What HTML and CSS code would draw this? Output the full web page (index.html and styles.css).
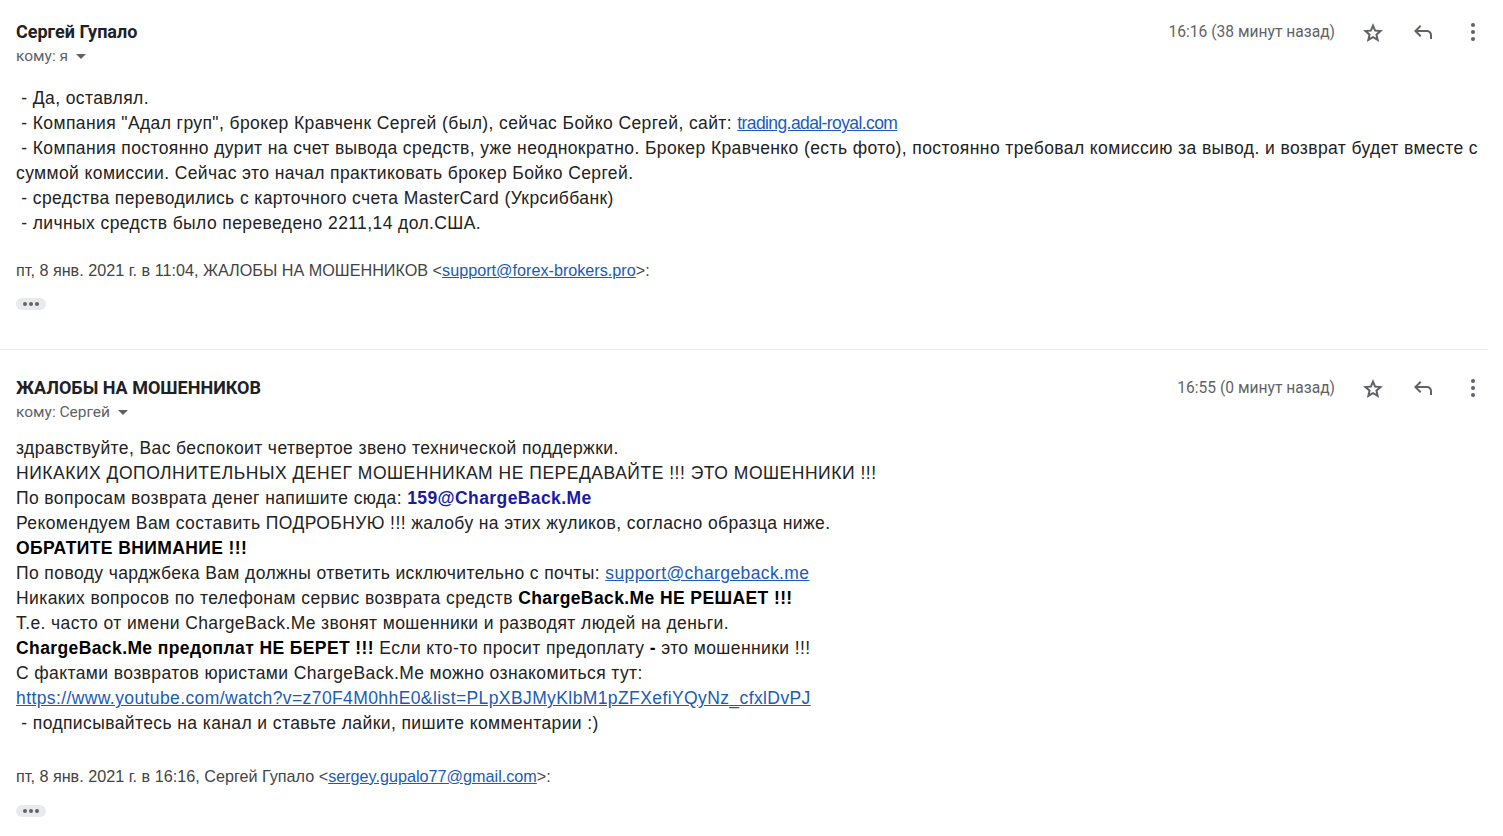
FILE: index.html
```html
<!DOCTYPE html>
<html lang="ru">
<head>
<meta charset="utf-8">
<title>Письмо</title>
<link rel="stylesheet" href="styles.css">
</head>
<body>
<div class="thread">
  <section class="msg msg-first">
    <header class="msg-head">
      <div class="who">
        <div class="sender">Сергей Гупало</div>
        <div class="to">кому: я <span class="caret"></span></div>
      </div>
      <div class="meta">
        <span class="time">16:16 (38 минут назад)</span>
        <button class="icon-btn" aria-label="star"><svg viewBox="0 0 24 24" width="24" height="24"><path fill="#5f6368" d="m8.85 17.825 3.15-1.9 3.150 1.925-.825-3.6 2.775-2.4-3.65-.325-1.45-3.4-1.45 3.375-3.65.325 2.775 2.425ZM5.825 22l1.625-7.025L2 10.250l7.2-.625L12 3l2.8 6.625 7.2.625-5.45 4.725L18.175 22 12 18.275Z"/></svg></button>
        <button class="icon-btn" aria-label="reply"><svg viewBox="0 0 24 24" width="24" height="24"><path fill="#5f6368" d="M19 19v-4q0-1.25-.875-2.125T16 12H6.825l3.6 3.6L9 17l-6-6 6-6 1.425 1.4-3.6 3.6H16q2.075 0 3.538 1.463T21 15v4Z"/></svg></button>
        <button class="icon-btn" aria-label="more"><svg viewBox="0 0 24 24" width="24" height="24"><circle cx="12" cy="5" r="2" fill="#5f6368"/><circle cx="12" cy="12" r="2" fill="#5f6368"/><circle cx="12" cy="19" r="2" fill="#5f6368"/></svg></button>
      </div>
    </header>
    <div class="msg-body">
      <p class="line">&nbsp;- Да, оставлял.</p>
      <p class="line">&nbsp;- Компания "Адал груп", брокер Кравченк Сергей (был), сейчас Бойко Сергей, сайт: <a class="narrow" href="#">trading.adal-royal.com</a></p>
      <p class="line">&nbsp;- Компания постоянно дурит на счет вывода средств, уже неоднократно. Брокер Кравченко (есть фото), постоянно требовал комиссию за вывод. и возврат будет вместе с суммой комиссии. Сейчас это начал практиковать брокер Бойко Сергей.</p>
      <p class="line">&nbsp;- средства переводились с карточного счета MasterCard (Укрсиббанк)</p>
      <p class="line">&nbsp;- личных средств было переведено 2211,14 дол.США.</p>
      <p class="attrib">пт, 8 янв. 2021 г. в 11:04, ЖАЛОБЫ НА МОШЕННИКОВ &lt;<a href="#">support@forex-brokers.pro</a>&gt;:</p>
      <div class="more-pill"><span></span><span></span><span></span></div>
    </div>
  </section>
  <hr class="divider">
  <section class="msg msg-second">
    <header class="msg-head">
      <div class="who">
        <div class="sender">ЖАЛОБЫ НА МОШЕННИКОВ</div>
        <div class="to">кому: Сергей <span class="caret"></span></div>
      </div>
      <div class="meta">
        <span class="time">16:55 (0 минут назад)</span>
        <button class="icon-btn" aria-label="star"><svg viewBox="0 0 24 24" width="24" height="24"><path fill="#5f6368" d="m8.85 17.825 3.15-1.9 3.150 1.925-.825-3.6 2.775-2.4-3.65-.325-1.45-3.4-1.45 3.375-3.65.325 2.775 2.425ZM5.825 22l1.625-7.025L2 10.250l7.2-.625L12 3l2.8 6.625 7.2.625-5.45 4.725L18.175 22 12 18.275Z"/></svg></button>
        <button class="icon-btn" aria-label="reply"><svg viewBox="0 0 24 24" width="24" height="24"><path fill="#5f6368" d="M19 19v-4q0-1.25-.875-2.125T16 12H6.825l3.6 3.6L9 17l-6-6 6-6 1.425 1.4-3.6 3.6H16q2.075 0 3.538 1.463T21 15v4Z"/></svg></button>
        <button class="icon-btn" aria-label="more"><svg viewBox="0 0 24 24" width="24" height="24"><circle cx="12" cy="5" r="2" fill="#5f6368"/><circle cx="12" cy="12" r="2" fill="#5f6368"/><circle cx="12" cy="19" r="2" fill="#5f6368"/></svg></button>
      </div>
    </header>
    <div class="msg-body">
      <p class="line">здравствуйте, Вас беспокоит четвертое звено технической поддержки.</p>
      <p class="line caps">НИКАКИХ ДОПОЛНИТЕЛЬНЫХ ДЕНЕГ МОШЕННИКАМ НЕ ПЕРЕДАВАЙТЕ !!! ЭТО МОШЕННИКИ !!!</p>
      <p class="line">По вопросам возврата денег напишите сюда: <b class="blue">159@ChargeBack.Me</b></p>
      <p class="line">Рекомендуем Вам составить ПОДРОБНУЮ !!! жалобу на этих жуликов, согласно образца ниже.</p>
      <p class="line"><b>ОБРАТИТЕ ВНИМАНИЕ !!!</b></p>
      <p class="line">По поводу чарджбека Вам должны ответить исключительно с почты: <a href="#">support@chargeback.me</a></p>
      <p class="line">Никаких вопросов по телефонам сервис возврата средств <b>ChargeBack.Me НЕ РЕШАЕТ !!!</b></p>
      <p class="line">Т.е. часто от имени ChargeBack.Me звонят мошенники и разводят людей на деньги.</p>
      <p class="line"><b>ChargeBack.Me предоплат НЕ БЕРЕТ !!!</b> Если кто-то просит предоплату <b>-</b> это мошенники !!!</p>
      <p class="line">С фактами возвратов юристами ChargeBack.Me можно ознакомиться тут:</p>
      <p class="line"><a href="#">https://www.youtube.com/watch?v=z70F4M0hhE0&amp;list=PLpXBJMyKlbM1pZFXefiYQyNz_cfxlDvPJ</a></p>
      <p class="line">&nbsp;- подписывайтесь на канал и ставьте лайки, пишите комментарии :)</p>
      <p class="attrib">пт, 8 янв. 2021 г. в 16:16, Сергей Гупало &lt;<a href="#">sergey.gupalo77@gmail.com</a>&gt;:</p>
      <div class="more-pill"><span></span><span></span><span></span></div>
    </div>
  </section>
</div>
</body>
</html>
```
FILE: styles.css
```css
* { box-sizing: border-box; }
html, body { margin: 0; padding: 0; background: #fff; }
body { font-family: "Liberation Sans", Arial, sans-serif; color: #222; }
.thread { width: 1503px; }
.msg { padding: 0 5px 0 16px; }
.msg-first { padding-top: 21px; padding-bottom: 39px; }
.msg-second { padding-top: 27px; }
.divider { margin: 0 15px 0 0; border: 0; border-top: 1px solid #ececec; height: 0; }
.msg-head { display: flex; justify-content: space-between; align-items: flex-start; }
.sender { font-family: Roboto, sans-serif; font-weight: 700; font-size: 18px; color: #202124; line-height: 22px; }
.to { font-family: Roboto, sans-serif; font-size: 15.5px; color: #5f6368; line-height: 20px; margin-top: 3px; display: flex; align-items: center; gap: 8px; }
.msg-first .msg-body { margin-top: 20px; }
.caret { width: 0; height: 0; border-left: 5px solid transparent; border-right: 5px solid transparent; border-top: 5px solid #5f6368; }
.meta { display: flex; align-items: center; height: 22px; }
.time { font-family: Roboto, sans-serif; font-size: 15.6px; color: #5f6368; margin-right: 13px; }
.icon-btn { background: none; border: 0; padding: 0; width: 50px; height: 24px; display: flex; align-items: center; justify-content: center; cursor: pointer; }
.msg-body { padding-right: 0; }
.msg-second .msg-body { margin-top: 14px; }
.line { margin: 0; font-size: 17.5px; letter-spacing: 0.4px; line-height: 25px; color: #222; }
.line.caps { letter-spacing: 0.52px; }
.line b { color: #000; }
.line .blue { color: #1a1aa6; }
a { color: #1a5bb8; text-decoration: underline; }
.line a.narrow { letter-spacing: -0.6px; }
.attrib { margin: 23px 0 0 0; font-size: 16.2px; line-height: 22px; color: #444; }
.msg-second .attrib { margin-top: 29px; }
.more-pill { margin-top: 17px; width: 30px; height: 12px; border-radius: 6px; background: #e8eaed; display: flex; align-items: center; justify-content: center; gap: 2px; }
.msg-second .more-pill { margin-top: 18px; }
.more-pill span { width: 4px; height: 4px; border-radius: 50%; background: #5f6368; }
```
